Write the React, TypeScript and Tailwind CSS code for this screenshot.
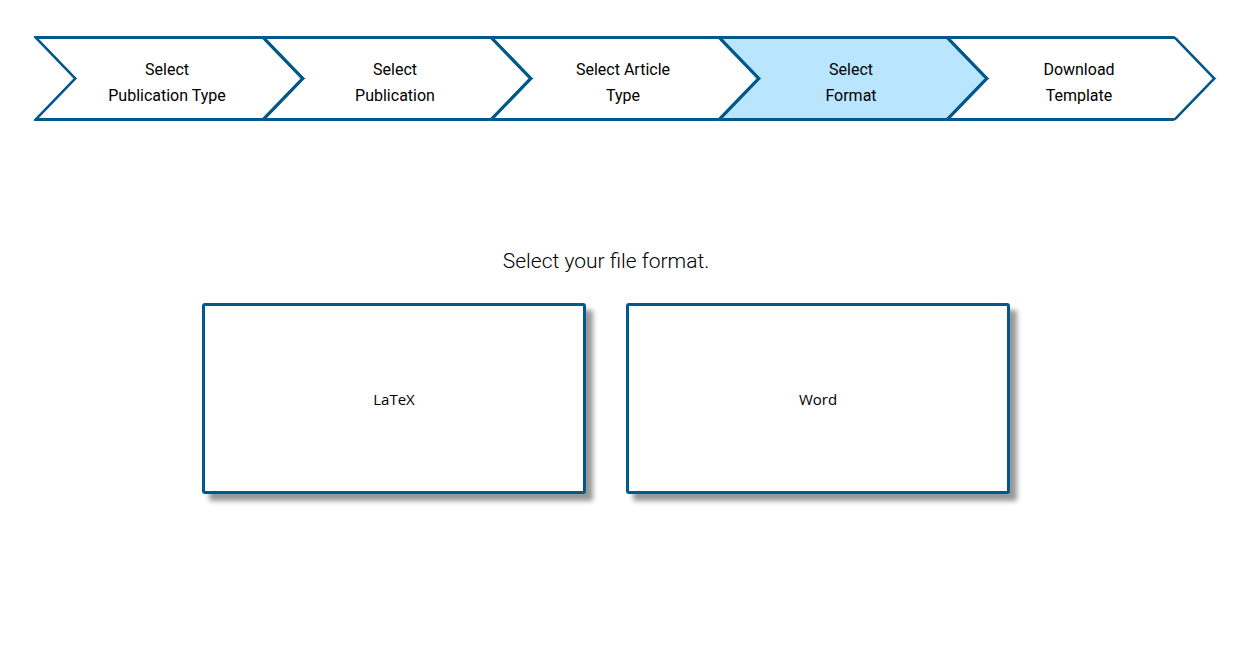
const steps = [
  { lines: ["Select", "Publication Type"], active: false },
  { lines: ["Select", "Publication"], active: false },
  { lines: ["Select Article", "Type"], active: false },
  { lines: ["Select", "Format"], active: true },
  { lines: ["Download", "Template"], active: false },
];

const formats = ["LaTeX", "Word"];

/* Each step is a chevron made of two skewed halves behind its label. */
function Step({ lines, active }: { lines: string[]; active: boolean }) {
  const fill = active ? "bg-[#b9e5ff]" : "bg-transparent";
  return (
    <li
      aria-current={active ? "step" : undefined}
      className="relative h-[85px] flex-1 pt-[21px] pl-9 text-center text-base leading-[26px]"
    >
      <span
        aria-hidden="true"
        className={`absolute top-0 left-[18px] -right-[21px] h-[43px] skew-x-[44deg] rounded-t-[3px] border-x-4 border-t-3 border-[#00588b] ${fill}`}
      />
      <span
        aria-hidden="true"
        className={`absolute bottom-0 left-[18px] -right-[21px] h-[43px] -skew-x-[44deg] rounded-b-[3px] border-x-4 border-b-3 border-[#00588b] ${fill}`}
      />
      <span className="relative block">{lines[0]}</span>
      <span className="relative block">{lines[1]}</span>
    </li>
  );
}

export default function App() {
  return (
    <div className="min-h-screen overflow-x-hidden bg-white font-[Roboto,sans-serif] text-black">
      <nav aria-label="Progress" className="pt-9 pr-[74px] pl-[35px]">
        <ol className="flex">
          {steps.map((step) => (
            <Step key={step.lines.join(" ")} {...step} />
          ))}
        </ol>
      </nav>
      <main className="pt-[126px] pr-[37px] pb-10">
        <h1 className="text-center text-[21px] leading-7 font-light">Select your file format.</h1>
        <div className="mt-7 flex flex-wrap justify-center gap-10">
          {formats.map((format) => (
            <button
              key={format}
              type="button"
              className="h-[191px] w-96 cursor-pointer rounded-[3px] border-3 border-[#00588b] bg-white pt-0.5 font-['Open_Sans',sans-serif] text-[15px] shadow-[7px_7px_5px_#999999]"
            >
              {format}
            </button>
          ))}
        </div>
      </main>
    </div>
  );
}
